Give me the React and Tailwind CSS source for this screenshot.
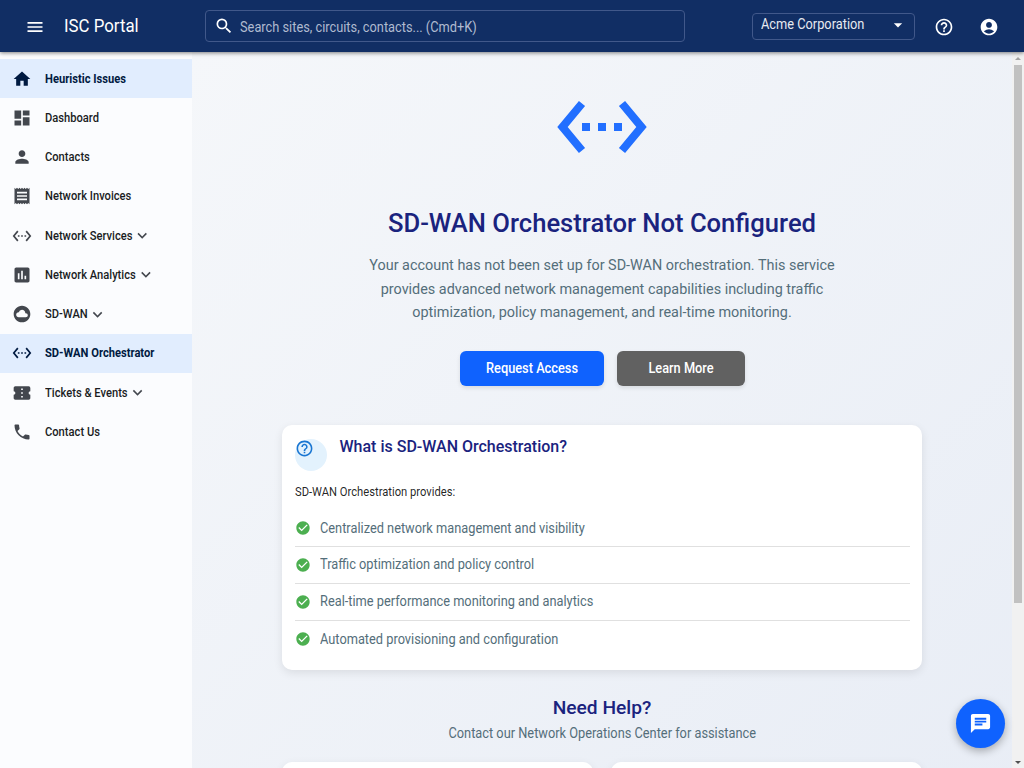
import {
  MdMenu, MdSearch, MdArrowDropDown, MdHelpOutline, MdAccountCircle, MdHome, MdDashboard,
  MdPerson, MdReceipt, MdSettingsEthernet, MdAssessment, MdCloudCircle, MdConfirmationNumber,
  MdPhone, MdExpandMore, MdCheckCircle, MdChat,
} from "react-icons/md";

const NAV = [
  { label: "Heuristic Issues", Icon: MdHome, active: true },
  { label: "Dashboard", Icon: MdDashboard },
  { label: "Contacts", Icon: MdPerson },
  { label: "Network Invoices", Icon: MdReceipt },
  { label: "Network Services", Icon: MdSettingsEthernet, expandable: true },
  { label: "Network Analytics", Icon: MdAssessment, expandable: true },
  { label: "SD-WAN", Icon: MdCloudCircle, expandable: true },
  { label: "SD-WAN Orchestrator", Icon: MdSettingsEthernet, active: true },
  { label: "Tickets & Events", Icon: MdConfirmationNumber, expandable: true },
  { label: "Contact Us", Icon: MdPhone },
];

const FEATURES = [
  "Centralized network management and visibility",
  "Traffic optimization and policy control",
  "Real-time performance monitoring and analytics",
  "Automated provisioning and configuration",
];

function Header() {
  return (
    <header className="z-10 flex h-[52px] shrink-0 items-center bg-[#112e64] text-white shadow-[0_1px_4px_rgba(0,0,0,0.5)]">
      <MdMenu className="ml-[25px] mt-0.5 size-5" />
      <h1 className="ml-[19px] w-[141px] origin-left scale-x-[0.935] text-[18px] leading-6">ISC Portal</h1>
      <div className="flex h-8 w-[480px] items-center rounded border border-[#41588a] pl-2">
        <MdSearch className="size-5" />
        <span className="ml-1.5 mt-0.5 origin-left scale-x-[0.914] text-[14px] text-[#b0bbd0]">
          Search sites, circuits, contacts... (Cmd+K)
        </span>
      </div>
      <div className="ml-[67px] flex h-[27px] w-[163px] items-center justify-between rounded border border-[#41588a] pl-2 pr-1.5 text-[#e7eaf0]">
        <span className="-mt-1 origin-left scale-x-[0.914] text-[14px] leading-5">Acme Corporation</span>
        <MdArrowDropDown className="-mt-0.5 size-5 text-white" />
      </div>
      <MdHelpOutline className="ml-[19px] mt-0.5 size-5" />
      <MdAccountCircle className="ml-[25px] mt-0.5 size-5" />
    </header>
  );
}

function Sidebar() {
  return (
    <nav className="w-48 shrink-0 bg-[#fbfcfe] pt-[7px]">
      {NAV.map(({ label, Icon, active, expandable }) => (
        <div
          key={label}
          className={`flex h-[39.28px] items-center pl-[12.4px] text-[12px] ${
            active ? "bg-[#e1edfe] font-bold text-[#001a41]" : "font-medium text-[#1a1c1e]"
          }`}
        >
          <Icon className={active ? "size-5" : "size-5 text-[#43474e]"} />
          <span className="ml-[12.4px] flex origin-left scale-x-[0.93] items-center whitespace-nowrap">
            {label}
            {expandable && <MdExpandMore className="ml-px size-[19px] scale-x-[1.07] text-[#43474e]" />}
          </span>
        </div>
      ))}
    </nav>
  );
}

function InfoCard() {
  return (
    <section className="mt-[39.5px] h-[244.5px] w-[640px] rounded-[10px] bg-white px-[12.5px] pt-[13px] shadow-[0_3px_10px_rgba(0,0,0,0.09)]">
      <div className="flex">
        <div className="mt-[0.5px] size-8 rounded-full bg-[#e3f2fd]">
          <MdHelpOutline className="size-[19px] text-[#1976d2]" />
        </div>
        <h3 className="ml-[13px] text-[16px] font-medium leading-[18px] text-[#1a237e]">What is SD-WAN Orchestration?</h3>
      </div>
      <p className="mt-[13.6px] origin-left scale-x-[0.933] text-[12px] leading-4 text-black/87">SD-WAN Orchestration provides:</p>
      <ul className="mt-[9.9px]">
        {FEATURES.map((text) => (
          <li key={text} className="flex h-[36.9px] items-center border-b border-[#e0e0e0] text-[14px] text-[#546e7a] last:border-0">
            <MdCheckCircle className="size-4 text-[#4caf50]" />
            <span className="ml-[9.6px] origin-left scale-x-[0.914]">{text}</span>
          </li>
        ))}
      </ul>
    </section>
  );
}

function Scrollbar() {
  return (
    <div className="flex w-3 shrink-0 flex-col items-center bg-[#f1f1f1] pt-[5px]">
      <div className="size-0 border-x-[3px] border-b-[3px] border-x-transparent border-b-[#a3a3a3]" />
      <div className="mt-[5px] h-[538px] w-2 bg-[#c1c1c1]" />
      <div className="mb-1 mt-auto size-0 border-x-[3px] border-t-[3px] border-x-transparent border-t-[#505050]" />
    </div>
  );
}

export default function App() {
  return (
    <div className="relative flex h-screen flex-col overflow-hidden font-[Roboto,sans-serif]">
      <Header />
      <div className="flex min-h-0 flex-1">
        <Sidebar />
        <main className="min-w-0 flex-1 overflow-hidden">
          <div className="flex h-[918px] flex-col items-center bg-[linear-gradient(135deg,#f5f7fa_0%,#e7ecf5_100%)] pt-[27.4px]">
            <MdSettingsEthernet className="size-24 text-[#226fff]" />
            <h2 className="mt-8 text-[25.6px] font-medium leading-8 text-[#1a237e]">SD-WAN Orchestrator Not Configured</h2>
            <p className="mt-[15px] w-[500px] scale-x-[0.96] text-center text-[15px] leading-[23.4px] text-[#546e7a]">
              Your account has not been set up for SD-WAN orchestration. This service provides advanced network
              management capabilities including traffic optimization, policy management, and real-time monitoring.
            </p>
            <div className="mt-[26px] flex gap-[13px] text-[14px] font-medium text-white">
              <button className="h-[35px] w-36 rounded-md bg-[#0f62fe] shadow-[0_2px_4px_rgba(0,0,0,0.1)]">
                <span className="block scale-x-[0.914]">Request Access</span>
              </button>
              <button className="h-[35px] w-32 rounded-md bg-[#616161] shadow-[0_2px_4px_rgba(0,0,0,0.1)]">
                <span className="block scale-x-[0.914]">Learn More</span>
              </button>
            </div>
            <InfoCard />
            <h2 className="mt-[26.4px] text-[19.2px] font-medium leading-6 text-[#1a237e]">Need Help?</h2>
            <p className="mt-[3px] scale-x-[0.914] text-[14px] leading-5 text-[#546e7a]">
              Contact our Network Operations Center for assistance
            </p>
            <div className="mt-[18.7px] grid w-[640px] grid-cols-2 gap-[18px]">
              <div className="h-28 rounded-[10px] bg-white shadow-[0_3px_10px_rgba(0,0,0,0.09)]" />
              <div className="h-28 rounded-[10px] bg-white shadow-[0_3px_10px_rgba(0,0,0,0.09)]" />
            </div>
          </div>
        </main>
        <Scrollbar />
      </div>
      <button className="absolute bottom-5 right-[19.2px] flex size-[48.6px] items-center justify-center rounded-full bg-[#0f62fe] text-white shadow-[0_3px_8px_rgba(0,0,0,0.3)]">
        <MdChat className="size-[23px]" />
      </button>
    </div>
  );
}
